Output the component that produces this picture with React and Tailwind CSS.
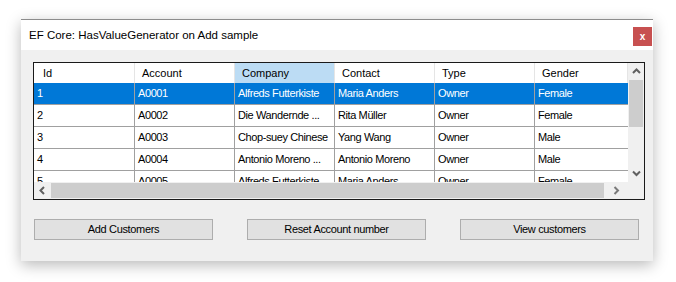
import React from "react";

const columns = ["Id", "Account", "Company", "Contact", "Type", "Gender"];

const rows = [
  ["1", "A0001", "Alfreds Futterkiste", "Maria Anders", "Owner", "Female"],
  ["2", "A0002", "Die Wandernde ...", "Rita Müller", "Owner", "Female"],
  ["3", "A0003", "Chop-suey Chinese", "Yang Wang", "Owner", "Male"],
  ["4", "A0004", "Antonio Moreno ...", "Antonio Moreno", "Owner", "Male"],
  ["5", "A0005", "Alfreds Futterkiste", "Maria Anders", "Owner", "Female"],
];

// widths of each column, first one includes the left edge pixel
const widths = ["w-[101px]", "w-[100px]", "w-[100px]", "w-[100px]", "w-[100px]", "w-[93px]"];

function Chevron({ dir, color = "#606060" }) {
  const pts = {
    up: "1,5 4.5,1.5 8,5",
    down: "1,1.5 4.5,5 8,1.5",
    left: "5,1 1.5,4.5 5,8",
    right: "1.5,1 5,4.5 1.5,8",
  }[dir];
  const vertical = dir === "up" || dir === "down";
  return (
    <svg width={vertical ? 9 : 7} height={vertical ? 7 : 9} viewBox={vertical ? "0 0 9 7" : "0 0 7 9"}>
      <polyline points={pts} fill="none" stroke={color} strokeWidth="2" />
    </svg>
  );
}

function Button({ children }) {
  return (
    <button className="w-[179px] h-[21px] border border-[#adadad] bg-[#e1e1e1] text-[11px] tracking-[-0.35px] text-black leading-none">
      {children}
    </button>
  );
}

export default function App() {
  return (
    <div
      className="w-[676px] h-[282px] bg-white pt-[19px] pl-[21px] overflow-hidden"
      style={{ fontFamily: '"Liberation Sans", Arial, sans-serif' }}
    >
      <div className="w-[632px] h-[242px] flex flex-col bg-[#f0f0f0] border-t border-[#8c8c8c] shadow-[0_4px_14px_rgba(0,0,0,0.28)]">
        {/* title bar */}
        <div className="h-[30px] bg-white flex justify-between pl-[8px] pr-[1px]">
          <span className="text-[11.5px] text-black mt-[7px]">EF Core: HasValueGenerator on Add sample</span>
          <div className="w-[19px] h-[19px] mt-[7px] bg-[#c75050] text-white text-[10px] font-bold flex items-center justify-center">
            x
          </div>
        </div>

        {/* client area */}
        <div className="flex-1 pl-[12px] pt-[12px]">
          <div className="w-[612px] h-[138px] border border-[#1a1a1a] bg-white flex flex-col">
            <div className="flex h-[119px]">
              <div className="w-[594px] overflow-hidden flex flex-col">
                {/* header */}
                <div className="flex h-[20px] shrink-0 text-[11px] text-black">
                  {columns.map((c, i) => (
                    <div
                      key={c}
                      className={`${widths[i]} shrink-0 flex items-center border-r border-[#e5e5e5] ${i === 0 ? "pl-[9px]" : "pl-[7px]"} ${c === "Company" ? "bg-[#bcdcf4]" : "bg-white"}`}
                    >
                      {c}
                    </div>
                  ))}
                </div>
                {/* rows */}
                {rows.map((r, ri) => (
                  <div
                    key={ri}
                    className={`flex h-[22px] shrink-0 text-[11px] tracking-[-0.4px] border-b border-[#a0a0a0] ${ri === 0 ? "bg-[#0078d7] text-white" : "bg-white text-black"}`}
                  >
                    {r.map((v, i) => (
                      <div
                        key={i}
                        className={`${widths[i]} shrink-0 flex items-center pl-[3px] whitespace-nowrap overflow-hidden ${i < 5 ? "border-r border-[#a0a0a0]" : ""}`}
                      >
                        {v}
                      </div>
                    ))}
                  </div>
                ))}
              </div>
              {/* vertical scrollbar */}
              <div className="w-[16px] bg-[#f0f0f0] flex flex-col">
                <div className="h-[17px] flex items-center justify-center">
                  <Chevron dir="up" />
                </div>
                <div className="h-[47px] bg-[#cdcdcd] mx-[1px]" />
                <div className="flex-1" />
                <div className="h-[17px] flex items-center justify-center">
                  <Chevron dir="down" />
                </div>
              </div>
            </div>
            {/* horizontal scrollbar */}
            <div className="flex h-[17px]">
              <div className="w-[594px] bg-[#f0f0f0] flex">
                <div className="w-[17px] flex items-center justify-center">
                  <Chevron dir="left" />
                </div>
                <div className="w-[553px] bg-[#cdcdcd] my-[1px]" />
                <div className="flex-1 flex items-center justify-center">
                  <Chevron dir="right" color="#7a7a7a" />
                </div>
              </div>
              <div className="w-[16px] bg-[#f0f0f0]" />
            </div>
          </div>

          {/* buttons */}
          <div className="flex gap-[34px] mt-[19px] pl-[1px]">
            <Button>Add Customers</Button>
            <Button>Reset Account number</Button>
            <Button>View customers</Button>
          </div>
        </div>
      </div>
    </div>
  );
}
